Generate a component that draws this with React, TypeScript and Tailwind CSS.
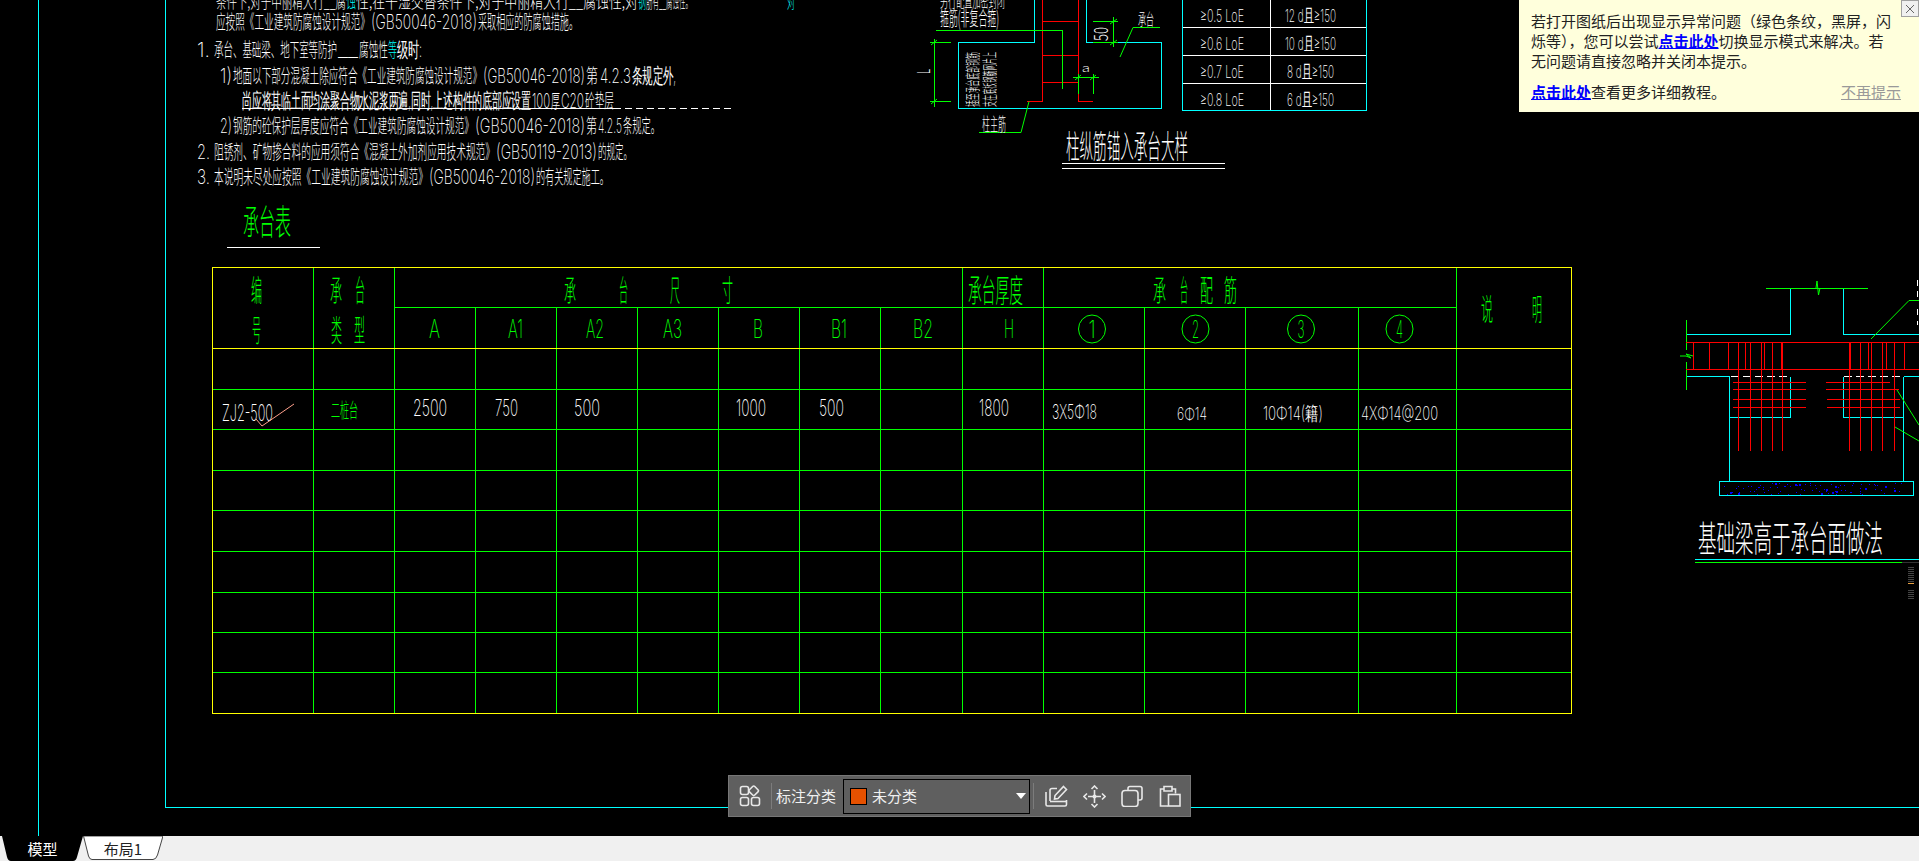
const CAD_FONT = "'Noto Sans CJK SC', 'Liberation Sans', sans-serif";
const LATIN_FONT = "Inter, 'Liberation Sans', sans-serif";
const GREEN = "#00ff00";
const CYAN = "#00ffff";
const RED = "#ff0000";
const WHITE = "#ffffff";
const YELLOW = "#ffff00";

const emWidth = (s: string) => {
  let w = 0;
  for (const c of s) w += c.charCodeAt(0) > 0x2000 ? 1 : 0.6;
  return w;
};

// text squeezed between x..r and y0..y1, the CAD stroke font is tall and narrow
const T: React.FC<{
  x: number;
  r: number;
  y0: number;
  y1: number;
  fill?: string;
  latin?: boolean;
  children: string;
}> = ({ x, r, y0, y1, fill = WHITE, latin, children }) => {
  const h = y1 - y0;
  const tall = latin ? h / 0.73 : h / 0.88;
  const base = latin ? y1 : y1 - tall * 0.08;
  const size = (r - x) / emWidth(children);
  const k = tall / size;
  return (
    <text
      transform={`scale(1 ${k})`}
      x={x}
      y={base / k}
      fontSize={size}
      fontWeight={latin ? 200 : 300}
      fill={fill}
      fontFamily={latin ? LATIN_FONT : CAD_FONT}
      textLength={r - x}
      lengthAdjust="spacingAndGlyphs"
    >
      {children}
    </text>
  );
};

const Rotated: React.FC<{
  x: number;
  y: number;
  len: number;
  size: number;
  children: string;
}> = ({ x, y, len, size, children }) => (
  <text
    transform={`translate(${x} ${y}) rotate(-90)`}
    fontSize={size}
    fontWeight={300}
    fill={WHITE}
    fontFamily={CAD_FONT}
    textLength={len}
    lengthAdjust="spacingAndGlyphs"
  >
    {children}
  </text>
);

const Lines: React.FC<{ color: string; d: string }> = ({ color, d }) => (
  <path d={d} stroke={color} strokeWidth={1} fill="none" shapeRendering="crispEdges" />
);

const topLine: [string, number, number, string][] = [
  ["条件下,对于中丽精大行__腐", 216, 346, WHITE],
  ["蚀", 346, 356, CYAN],
  ["性,在干湿交替条件下,对于中丽精大行__腐蚀性,对", 356, 638, WHITE],
  ["钢", 638, 646, CYAN],
  ["筋有__腐蚀性。", 646, 692, WHITE],
  ["对", 787, 795, CYAN],
];

const notes: { y: number; runs: [string, number, number, string?][] }[] = [
  {
    y: 22,
    runs: [
      ["应按照《工业建筑防腐蚀设计规范》", 216, 370],
      ["(GB50046-2018)", 371, 477],
      ["采取相应的防腐蚀措施。", 478, 578],
    ],
  },
  {
    y: 50,
    runs: [
      ["1.", 197, 210],
      ["承台、基础梁、地下室等防护", 214, 337],
      ["__", 338, 358],
      ["腐蚀性", 359, 388],
      ["等", 388, 397, CYAN],
      ["级时:", 397, 422],
    ],
  },
  {
    y: 76,
    runs: [
      ["1)", 220, 232],
      ["地面以下部分混凝土除应符合《工业建筑防腐蚀设计规范》", 233, 482],
      ["(GB50046-2018)", 483, 585],
      ["第", 586, 598],
      ["4.2.3", 600, 631],
      ["条规定外,", 632, 676],
    ],
  },
  {
    y: 101,
    runs: [
      ["尚应将其临土面均涂聚合物水泥浆两遍,同时,上述构件的底部应设置", 242, 531],
      ["100", 532, 550],
      ["厚", 551, 560],
      ["C20", 561, 584],
      ["砼垫层", 585, 614],
    ],
  },
  {
    y: 126,
    runs: [
      ["2)", 220, 232],
      ["钢筋的砼保护层厚度应符合《工业建筑防腐蚀设计规范》", 233, 474],
      ["(GB50046-2018)", 475, 585],
      ["第", 586, 597],
      ["4.2.5", 598, 622],
      ["条规定。", 623, 660],
    ],
  },
  {
    y: 152,
    runs: [
      ["2.", 197, 210],
      ["阻锈剂、矿物掺合料的应用须符合《混凝土外加剂应用技术规范》", 214, 495],
      ["(GB50119-2013)", 496, 597],
      ["的规定。", 598, 632],
    ],
  },
  {
    y: 177,
    runs: [
      ["3.", 197, 210],
      ["本说明未尽处应按照《工业建筑防腐蚀设计规范》", 214, 428],
      ["(GB50046-2018)", 429, 535],
      ["的有关规定施工。", 536, 609],
    ],
  },
];

const colX = [313.5, 394.5, 475.5, 556.5, 637.5, 718.5, 799.5, 880.5, 962.5, 1043.5, 1144.5, 1245.5, 1358.5, 1456.5];
const rowY = [389.5, 429.5, 470.5, 510.5, 551.5, 592.5, 632.5, 672.5];

const header: [string, number, number, number, number][] = [
  ["编", 251, 262, 277, 303],
  ["号", 252, 261, 317, 343],
  ["承", 330, 342, 277, 303],
  ["台", 355, 365, 277, 303],
  ["类", 331, 342, 317, 343],
  ["型", 354, 365, 317, 343],
  ["承", 564, 576, 277, 303],
  ["台", 619, 628, 277, 303],
  ["尺", 670, 680, 277, 303],
  ["寸", 722, 733, 277, 303],
  ["承台厚度", 968, 1023, 277, 305],
  ["承", 1153, 1166, 277, 303],
  ["台", 1180, 1188, 277, 303],
  ["配", 1200, 1213, 277, 303],
  ["筋", 1224, 1237, 277, 303],
  ["说", 1481, 1493, 296, 322],
  ["明", 1532, 1542, 296, 322],
];

const params: [string, number, number][] = [
  ["A", 429, 440],
  ["A1", 508, 523],
  ["A2", 586, 604],
  ["A3", 663, 682],
  ["B", 753, 763],
  ["B1", 831, 847],
  ["B2", 913, 933],
  ["H", 1004, 1014],
];

const row: [string, number, number, number, number][] = [
  ["ZJ2-500", 222, 273, 404, 421],
  ["2500", 413, 447, 399, 416],
  ["750", 495, 518, 399, 416],
  ["500", 574, 600, 399, 416],
  ["1000", 736, 766, 399, 416],
  ["500", 819, 844, 399, 416],
  ["1800", 979, 1009, 399, 416],
  ["3X5Φ18", 1052, 1097, 404, 419],
  ["6Φ14", 1177, 1207, 407, 420],
  ["10Φ14(籍)", 1263, 1323, 406, 420],
  ["4XΦ14@200", 1361, 1438, 406, 420],
];

const circles: [number, string][] = [
  [1092, "1"],
  [1195.5, "2"],
  [1301, "3"],
  [1399.5, "4"],
];

const anchorRows = [
  { y0: 9, a: "≥0.5 LoE", b: "12 d且≥150", bx: 1285, br: 1336 },
  { y0: 37, a: "≥0.6 LoE", b: "10 d且≥150", bx: 1285, br: 1336 },
  { y0: 65, a: "≥0.7 LoE", b: "8 d且≥150", bx: 1287, br: 1334 },
  { y0: 93, a: "≥0.8 LoE", b: "6 d且≥150", bx: 1287, br: 1334 },
];

// vertical rebars in the beam section on the right, long ones run down into the cap
const stirrups = [1693, 1709, 1728, 1745, 1764, 1781, 1850, 1868, 1886, 1904];
const longBars = [1738, 1750, 1761, 1772, 1782, 1849, 1860, 1871, 1882, 1894];

const specks = (() => {
  const out: [number, number, number][] = [];
  let seed = 17;
  for (let i = 0; i < 90; i++) {
    seed = (seed * 137 + 71) % 1009;
    const x = 1724 + (seed % 184);
    seed = (seed * 137 + 71) % 1009;
    const y = 483 + (seed % 12);
    out.push([x, y, i % 7 === 0 ? 2 : 1]);
  }
  return out;
})();

const CadDrawing = () => (
  <svg width={1919} height={836} viewBox="0 0 1919 836" className="block">
    {/* frame */}
    <Lines color={CYAN} d="M38.5 0V836 M165.5 0V807.5H1919" />

    {/* notes */}
    <g>
      {topLine.map(([s, x, r, c]) => (
        <T key={x} x={x} r={r} y0={-6} y1={9} fill={c}>
          {s}
        </T>
      ))}
      {notes.map((n) =>
        n.runs.map(([s, x, r, c]) => {
          const latin = emWidth(s) < s.length;
          return (
            <T
              key={`${n.y}${x}`}
              latin={latin}
              x={x}
              r={r}
              y0={n.y - (latin ? 7.5 : 8.5)}
              y1={n.y + (latin ? 7.5 : 8.5)}
              fill={c ?? WHITE}
            >
              {s}
            </T>
          );
        }),
      )}
      <Lines color={WHITE} d="M242 108.5H614" />
      <path d="M614 108.5H732" stroke={WHITE} strokeWidth={1} strokeDasharray="7 4" shapeRendering="crispEdges" />
      <T x={243} r={291} y0={207} y1={238} fill={GREEN}>
        承台表
      </T>
      <Lines color={WHITE} d="M227 247.5H320" />
    </g>

    {/* pile cap table */}
    <g>
      <Lines
        color={GREEN}
        d={[
          "M394 307.5H1456",
          ...rowY.map((y) => `M212 ${y}H1571`),
          "M313.5 268V713",
          "M394.5 268V713",
          ...colX.slice(2, 7).map((x) => `M${x} 308V713`),
          "M880.5 308V713",
          "M962.5 268V713",
          "M1043.5 268V713",
          ...colX.slice(10, 13).map((x) => `M${x} 308V713`),
          "M1456.5 268V713",
        ].join(" ")}
      />
      <Lines color={YELLOW} d="M212.5 267.5H1571.5V713.5H212.5Z M212 348.5H1571" />
      {header.map(([s, x, r, y0, y1]) => (
        <T key={`${s}${x}`} x={x} r={r} y0={y0} y1={y1} fill={GREEN}>
          {s}
        </T>
      ))}
      {params.map(([s, x, r]) => (
        <T key={s} latin x={x} r={r} y0={319} y1={338} fill={GREEN}>
          {s}
        </T>
      ))}
      {circles.map(([cx, s]) => (
        <g key={s}>
          <ellipse cx={cx} cy={329} rx={13.5} ry={14} stroke={GREEN} fill="none" />
          <T latin x={cx - 3.5} r={cx + 3.5} y0={320} y1={338} fill={GREEN}>
            {s}
          </T>
        </g>
      ))}
      {row.map(([s, x, r, y0, y1]) => (
        <T key={`${s}${x}`} latin x={x} r={r} y0={y0} y1={y1}>
          {s}
        </T>
      ))}
      <T x={331} r={358} y0={402} y1={420} fill={GREEN}>
        二桩台
      </T>
      <path d="M256 419L262 426L294 404" stroke="#ffa08c" fill="none" />
    </g>

    {/* column anchor detail */}
    <g>
      <Lines
        color={CYAN}
        d="M1034.5 0V42.5H958.5V108.5H1161.5V42.5H1086.5V0 M1182.5 0V110.5H1366.5V0 M1182 110.5H1366"
      />
      <Lines
        color={RED}
        d="M1042.5 0V101.5H1027 M1078.5 0V101.5H1093 M1043 21.5H1078 M1043 55.5H1078 M1043 82.5H1078"
      />
      <Lines
        color={GREEN}
        d="M936 30.5H1062.5V89 M934.5 39V107 M930 42.5H951 M930 101.5H951 M1113.5 17V47 M1093 21.5H1118 M1093 42.5H1118 M1073 77.5H1099 M1078.5 74V94 M1093.5 74V94"
      />
      <path
        d="M1120 57L1133 27.5H1160 M1029 101.5L1021 132.5H979 M931 45L937 40 M931 104L937 99 M1110 45L1117 40 M1110 24L1117 19 M1075 80L1081 75 M1090 80L1096 75"
        stroke={GREEN}
        fill="none"
      />
      <Lines color={WHITE} d="M1270.5 0V110 M1183 27.5H1366 M1183 55.5H1366 M1183 83.5H1366" />
      {anchorRows.map((r) => (
        <g key={r.y0}>
          <T latin x={1200} r={1244} y0={r.y0} y1={r.y0 + 13}>
            {r.a}
          </T>
          <T latin x={r.bx} r={r.br} y0={r.y0} y1={r.y0 + 13}>
            {r.b}
          </T>
        </g>
      ))}
      <T x={940} r={1005} y0={-7} y1={8}>
        另行配置加密封闭
      </T>
      <T x={940} r={999} y0={10} y1={28}>
        箍筋(非复合箍)
      </T>
      <T x={1138} r={1154} y0={12} y1={26}>
        承台
      </T>
      <T x={982} r={1006} y0={116} y1={132}>
        柱主筋
      </T>
      <Rotated x={978} y={107} len={55} size={15}>
        插至承台底部钢筋
      </Rotated>
      <Rotated x={995} y={107} len={55} size={15}>
        支在底板钢筋网片上
      </Rotated>
      <Rotated x={930} y={74} len={5} size={18}>
        L
      </Rotated>
      <Rotated x={1108} y={41} len={14} size={19}>
        50
      </Rotated>
      <T latin x={1082} r={1090} y0={65} y1={72}>
        a
      </T>
      <T x={1066} r={1188} y0={133} y1={161}>
        柱纵筋锚入承台大样
      </T>
      <Lines color={WHITE} d="M1062 163.5H1225 M1062 168.5H1225" />
    </g>

    {/* foundation beam section */}
    <g>
      <Lines
        color={CYAN}
        d="M1790.5 288V334.5H1686 M1843.5 288V334.5H1919 M1686 376.5H1729.5V481 M1790.5 376.5V417.5H1729.5 M1843.5 376.5V417.5H1903.5 M1903.5 376.5H1919 M1903.5 376.5V481 M1719.5 481.5H1913.5V495.5H1719.5Z"
      />
      <path d="M1731 376.5H1790" stroke={WHITE} strokeDasharray="8 4" shapeRendering="crispEdges" />
      <path d="M1844 376.5H1903" stroke={WHITE} strokeDasharray="8 4" shapeRendering="crispEdges" />
      <Lines color={GREEN} d="M1766 288.5H1868 M1686.5 320V350 M1686.5 362V390" />
      <path
        d="M1816 288L1817 281L1818.5 295L1820 288 M1680 356H1686L1691 358L1686 354L1693 356"
        stroke={GREEN}
        fill="none"
      />
      <Lines color={RED} d="M1686 342.5H1919 M1686 369.5H1919" />
      <Lines
        color={RED}
        d={[
          ...stirrups.map((x) => `M${x + 0.5} 342V369`),
          ...longBars.map((x) => `M${x + 0.5} 342V451`),
          "M1733 382.5H1806 M1733 389.5H1806 M1733 399.5H1806 M1733 407.5H1806",
          "M1826 382.5H1890 M1826 389.5H1899 M1827 399.5H1900 M1827 407.5H1900",
        ].join(" ")}
      />
      <path
        d="M1871 339L1909 300.5H1919 M1897 390L1919 425 M1895 427L1919 441"
        stroke={GREEN}
        fill="none"
      />
      {specks.map(([x, y, s], i) => (
        <rect key={i} x={x} y={y} width={s} height={s} fill="#0000ff" />
      ))}
      <T x={1698} r={1883} y0={523} y1={555}>
        基础梁高于承台面做法
      </T>
      <Lines color={CYAN} d="M1695 559.5H1919" />
      <Lines color={GREEN} d="M1695 562.5H1902" />
      <Lines color="#333333" d="M1902 562.5H1919" />
      <Lines
        color="#444444"
        d="M1908 567.5H1914 M1908 569.5H1914 M1908 571.5H1914 M1908 573.5H1914 M1908 575.5H1914 M1908 577.5H1914 M1908 579.5H1914 M1908 581.5H1914 M1908 590.5H1914 M1908 592.5H1914 M1908 594.5H1914 M1908 596.5H1914 M1908 598.5H1914"
      />
      <Lines color="#e8a040" d="M1908 583.5H1914" />
      <Lines color={WHITE} d="M1917 280V286 M1917 291V297 M1917 309V315 M1917 321V325" />
    </g>
  </svg>
);

const Notice = () => (
  <div className="absolute top-0 left-[1519px] h-[112px] w-[400px] bg-[#ffffdc] pt-[11px] pl-[12px] text-[15px] leading-[20px] text-[#222222]">
    <p className="w-[361px]">
      若打开图纸后出现显示异常问题（绿色条纹，黑屏，闪烁等），您可以尝试
      <a className="font-bold text-[#0000ff] underline">点击此处</a>
      切换显示模式来解决。若无问题请直接忽略并关闭本提示。
    </p>
    <div className="mt-[11px] flex w-[370px] justify-between">
      <span>
        <a className="font-bold text-[#0000ff] underline">点击此处</a>
        查看更多详细教程。
      </span>
      <a className="text-[#999999] underline">不再提示</a>
    </div>
    <button className="absolute top-0 right-0 flex h-[17px] w-[18px] items-center justify-center border border-[#a0a0a0] bg-[#f0f0f0]">
      <svg width="10" height="10" viewBox="0 0 10 10">
        <path d="M1 1L9 9M9 1L1 9" stroke="#666666" fill="none" />
      </svg>
    </button>
  </div>
);

const iconClass = "shrink-0 stroke-[#e8e8e8]";

const Toolbar = () => (
  <div className="absolute top-[775px] left-[728px] flex h-[42px] w-[463px] items-center border border-[#777777] bg-[#5f5f5f] text-[15px] text-[#f0f0f0]">
    <svg width="22" height="22" viewBox="0 0 22 22" fill="none" strokeWidth="1.6" className={`${iconClass} ml-[10px]`}>
      <rect x="1.5" y="1.5" width="8" height="8" rx="2" />
      <rect x="11" y="2" width="7.5" height="7.5" rx="1.5" transform="rotate(45 14.7 5.7)" />
      <rect x="1.5" y="12.5" width="8" height="8" rx="2" />
      <rect x="12.5" y="12.5" width="8" height="8" rx="2" />
    </svg>
    <div className="mr-[4px] ml-[10px] h-[26px] w-px bg-[#7c7c7c]" />
    <span className="w-[59px] shrink-0 whitespace-nowrap">标注分类</span>
    <div className="ml-[8px] flex h-[35px] w-[187px] shrink-0 items-center border border-black pl-[6px]">
      <div className="h-[17px] w-[17px] border border-black bg-[#e65100]" />
      <span className="ml-[5px]">未分类</span>
      <div className="mr-[3px] ml-auto h-0 w-0 border-x-[5px] border-t-[6px] border-x-transparent border-t-white" />
    </div>
    <div className="ml-[3px] h-[26px] w-px bg-[#7c7c7c]" />
    <svg width="23" height="23" viewBox="0 0 23 23" fill="none" strokeWidth="1.6" className={`${iconClass} ml-[11px]`}>
      <path d="M5 16V5.500A2 2 0 0 1 7 3.500H12" />
      <path d="M1 7V19.500A1.500 1.500 0 0 0 2.500 21H20A1.500 1.500 0 0 0 21.500 19.500V15" />
      <path d="M5 16.500H21.500" />
      <path d="M18.500 1.500L21.500 4.500L13 13.500L9.500 14L10 10.500Z" />
    </svg>
    <svg width="23" height="23" viewBox="0 0 23 23" fill="none" strokeWidth="1.6" className={`${iconClass} ml-[15px]`}>
      <path d="M11.500 5V18M5 11.500H18" />
      <path d="M8.500 4L11.500 1L14.500 4M8.500 19L11.500 22L14.500 19M4 8.500L1 11.500L4 14.500M19 8.500L22 11.500L19 14.500" />
      <circle cx="11.500" cy="11.500" r="1.200" fill="#e8e8e8" />
    </svg>
    <svg width="22" height="22" viewBox="0 0 22 22" fill="none" strokeWidth="1.6" className={`${iconClass} ml-[15px]`}>
      <path d="M7 5V3.500A2 2 0 0 1 9 1.500H19A2 2 0 0 1 21 3.500V13A2 2 0 0 1 19 15H17" />
      <rect x="1" y="5.500" width="16" height="16" rx="3" />
    </svg>
    <svg width="22" height="22" viewBox="0 0 22 22" fill="none" strokeWidth="1.6" className={`${iconClass} ml-[16px]`}>
      <path d="M9 21H1.500V4H5M13 4H16.500V8.500" />
      <path d="M5 1.500H13V6H5Z" />
      <rect x="9.500" y="9.500" width="11.500" height="11.500" />
    </svg>
  </div>
);

const Tabs = () => (
  <div className="relative z-10 flex h-[25px] shrink-0 items-stretch bg-[#f0f0f0] pl-[2px] text-[15px]">
    <div className="relative flex w-[81px] items-center justify-center text-white">
      <svg width="81" height="25" viewBox="0 0 81 25" className="absolute inset-0">
        <path d="M0 0H81L75 21Q74 25 71 25H9Q6 25 5 21Z" fill="#000000" />
      </svg>
      <span className="relative mt-px">模型</span>
    </div>
    <div className="relative flex w-[80px] items-center justify-center text-[#222222]">
      <svg width="80" height="25" viewBox="0 0 80 25" className="absolute inset-0">
        <path d="M0.500 0H80L74.500 19Q73 23.500 70 23.500H9Q6.500 23.500 5.500 20Z" fill="#ffffff" stroke="#444444" />
      </svg>
      <span className="relative mt-px">布局1</span>
    </div>
  </div>
);

export default function App() {
  return (
    <div className="flex h-[861px] w-[1919px] flex-col overflow-hidden bg-black [font-family:'Noto_Sans_CJK_SC','Liberation_Sans',sans-serif]">
      <div className="relative h-[836px] shrink-0">
        <CadDrawing />
        <Notice />
        <Toolbar />
      </div>
      <Tabs />
    </div>
  );
}
